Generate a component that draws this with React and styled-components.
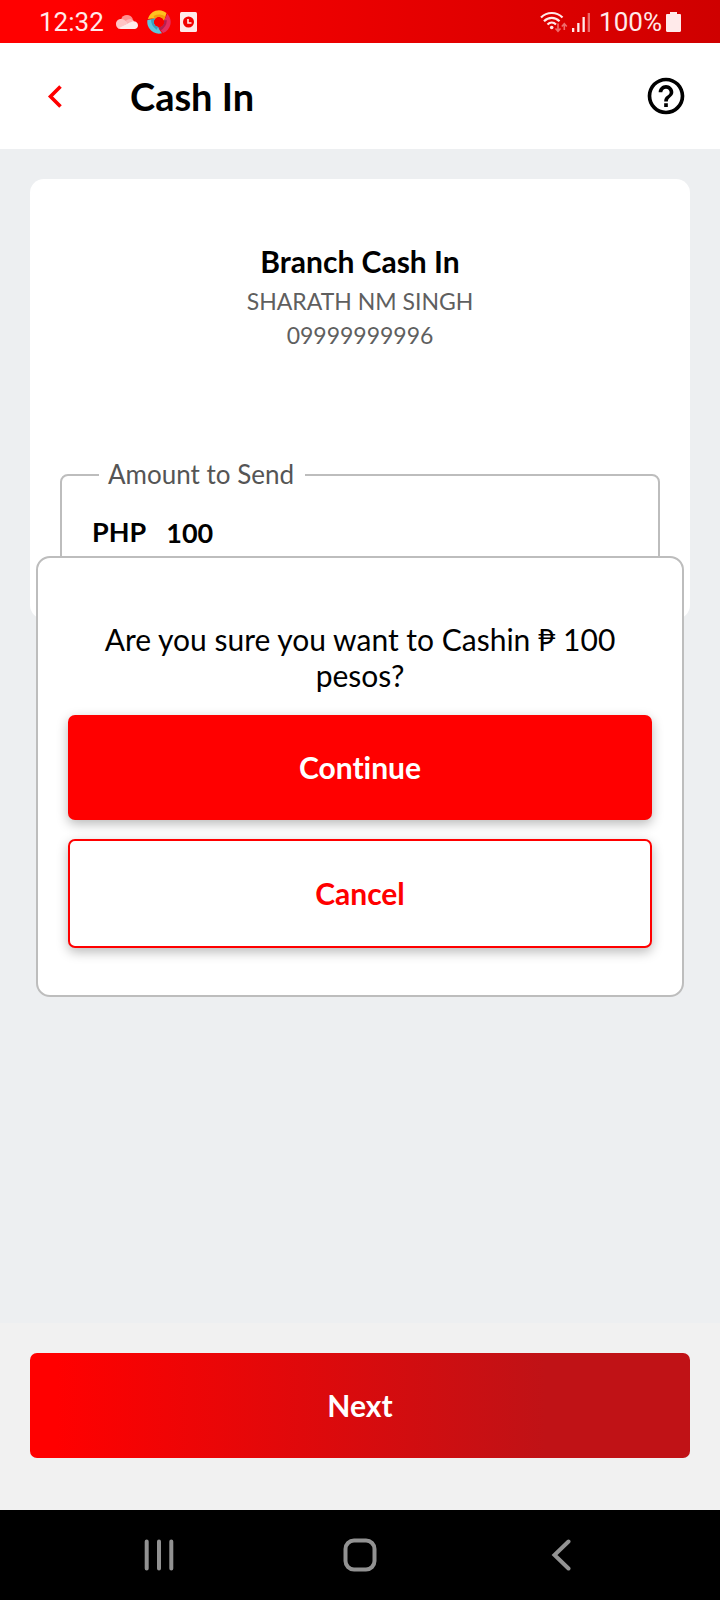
import React, { useState } from "react";
import styled, { createGlobalStyle, css } from "styled-components";
import { MdHelpOutline } from "react-icons/md";

const GlobalStyle = createGlobalStyle`
  *, *::before, *::after { box-sizing: border-box; }
  body {
    margin: 0;
    background: #edeff1;
    color: #000;
    font-family: Lato, "Liberation Sans", sans-serif;
    font-variant-ligatures: none;
  }
  button, input { font-family: inherit; font-variant-ligatures: none; }
`;

const Page = styled.div`
  min-height: 100vh;
  display: flex;
  flex-direction: column;
`;

const StatusBar = styled.div`
  height: 43px;
  padding: 0 39px;
  display: flex;
  align-items: center;
  justify-content: space-between;
  background: linear-gradient(90deg, #ff0000 10%, #cf0000 100%);
  color: #ffeaea;
  font-family: Roboto, "Liberation Sans", sans-serif;
  font-size: 26px;
  line-height: 30px;
`;

const StatusGroup = styled.div`
  display: flex;
  align-items: center;
  gap: ${(p) => p.$gap}px;

  svg { display: block; }
`;

const Screen = styled.div`
  position: relative;
  flex: 1;
  display: flex;
  flex-direction: column;
`;

const Header = styled.header`
  height: 106px;
  padding: 0 32px 0 33px;
  display: flex;
  align-items: center;
  background: #fff;
`;

const IconButton = styled.button`
  width: 44px;
  height: 44px;
  padding: 0;
  border: 0;
  display: grid;
  place-items: center;
  background: none;
  color: ${(p) => p.$color};
  cursor: pointer;

  svg { display: block; }
`;

const Title = styled.h1`
  flex: 1;
  margin: 0 0 0 53px;
  font-size: 38px;
  font-weight: 700;
  line-height: 46px;
`;

const Content = styled.main`
  flex: 1;
  padding: 30px;
`;

const Card = styled.section`
  padding: 62px 30px 30px;
  border-radius: 14px;
  background: #fff;
`;

const Recipient = styled.div`
  text-align: center;
`;

const RecipientTitle = styled.h2`
  margin: 0 0 3px;
  font-size: 30px;
  font-weight: 700;
  line-height: 40px;
`;

const RecipientLine = styled.p`
  margin: 0;
  color: #5f5f5f;
  font-size: 23px;
  line-height: 34px;
`;

const AmountField = styled.fieldset`
  margin: 107px 0 0;
  padding: 23px 30px 37px;
  min-width: 0;
  border: 2px solid #bdbdbd;
  border-radius: 8px;
`;

const Legend = styled.legend`
  margin-left: 7px;
  padding: 0 11px 2px 9px;
  color: #555;
  font-size: 26px;
  line-height: 30px;
`;

const AmountRow = styled.div`
  display: flex;
  align-items: center;
  gap: 20px;
  font-size: 27px;
  font-weight: 700;
  line-height: 36px;
`;

const AmountInput = styled.input`
  flex: 1;
  min-width: 0;
  height: 36px;
  padding: 0;
  border: 0;
  outline: 0;
  background: none;
  color: inherit;
  font-size: inherit;
  font-weight: inherit;
`;

const Footer = styled.footer`
  padding: 30px 30px 52px;
  background: #f1f1f1;
`;

const variants = {
  solid: css`
    height: 105px;
    background: #ff0000;
    color: #fff;
    box-shadow: 0 4px 12px rgba(0, 0, 0, 0.28);
  `,
  outline: css`
    height: 109px;
    border: 2px solid #ff0000;
    background: #fff;
    color: #ff0000;
    box-shadow: 0 4px 12px rgba(0, 0, 0, 0.28);
  `,
  gradient: css`
    height: 105px;
    background: linear-gradient(90deg, #ff0000 4%, #c01216 78%);
    color: #fff;
  `,
};

const Button = styled.button`
  display: block;
  width: 100%;
  padding: 0 0 2px;
  border: 0;
  border-radius: 7px;
  font-size: 30px;
  font-weight: 700;
  line-height: 36px;
  cursor: pointer;
  ${(p) => variants[p.$variant]}
`;

const Overlay = styled.div`
  position: absolute;
  inset: 0;
  padding: 0 36px;
  display: flex;
  align-items: center;
`;

const Dialog = styled.div`
  width: 100%;
  padding: 63px 30px 47px;
  border: 2px solid #bdbdbd;
  border-radius: 14px;
  background: #fff;
`;

const Question = styled.p`
  margin: 0 0 22px;
  padding: 0 24px;
  text-align: center;
  font-size: 30px;
  line-height: 36px;
`;

const Actions = styled.div`
  display: grid;
  gap: 19px;
`;

const NavBar = styled.nav`
  height: 90px;
  padding: 0 58px;
  display: grid;
  grid-template-columns: repeat(3, 1fr);
  place-items: center;
  background: #000;
`;

function CloudIcon() {
  return (
    <svg width="22" height="16" viewBox="0 0 22 16" aria-hidden="true">
      <path d="M5 6C5.5 2.800 8 1 11 1c2.600 0 4.800 1.400 5.800 4L9 9z" fill="#ff8f8f" />
      <path d="M5 5c-3 0-5 2.300-5 5 0 2 1 3.600 2.500 4.500L13 9 9 6.500C8 5.500 6.600 5 5 5z" fill="#ffc4c4" />
      <path d="M9.500 7c2-2 5-2.800 7.500-1.400L18 8l-5 1.500z" fill="#ffb3b3" />
      <path d="M2 14.300 12.500 9l4-1.600C20 7 22 9 22 11.500c0 2-1.600 3.500-3.600 3.500H5c-1.200 0-2.200-.2-3-.7z" fill="#ffecec" />
    </svg>
  );
}

const vanes = [
  { angle: 0, light: "#ffc01f", dark: "#f59a0c" },
  { angle: 120, light: "#e62e60", dark: "#b3204f" },
  { angle: 240, light: "#5cc6dc", dark: "#3a9fc0" },
];

function PinwheelIcon() {
  return (
    <svg width="24" height="24" viewBox="0 0 24 24" aria-hidden="true">
      {vanes.map(({ angle, light, dark }) => (
        <g key={angle} transform={`rotate(${angle} 12 12)`}>
          <path d="M.8 9A11.600 11.600 0 0 1 19.500 3l-2.500 7.500A5.200 5.200 0 0 0 8 8.700Q4 8 .8 9z" fill={light} />
          <path d="M6.500 6Q13 3 18.500 6.500l-1.500 4A5.200 5.200 0 0 0 8 8.700z" fill={dark} />
        </g>
      ))}
    </svg>
  );
}

function DocClockIcon() {
  return (
    <svg width="17" height="20" viewBox="0 0 17 20" aria-hidden="true">
      <rect width="17" height="20" rx="1.500" fill="#ffeaea" />
      <circle cx="8.500" cy="10" r="5.500" fill="#f20000" />
      <path d="M8 7v4h3.500" fill="none" stroke="#ffeaea" strokeWidth="1.600" />
    </svg>
  );
}

function WifiIcon() {
  return (
    <svg width="28" height="22" viewBox="0 0 28 22" aria-hidden="true">
      <g fill="none" stroke="#ffeaea" strokeWidth="2.200">
        <path d="M1 6.500c6-6 15.500-6 21.500 0" />
        <path d="M4 10.300c4.500-4.500 11-4.500 15.500 0" />
        <path d="M7.500 13.500c2.500-2.400 6-2.400 8.500 0" />
      </g>
      <circle cx="11.700" cy="16.500" r="1.800" fill="#ffeaea" />
      <g fill="none" stroke="#ee6b6b" strokeWidth="1.600">
        <path d="M18 12.500v7.500M15.500 17.500 18 20.200l2.500-2.700" />
        <path d="M24.300 19v-6M21.800 15.500l2.500-2.700 2.500 2.700" />
      </g>
    </svg>
  );
}

function SignalIcon() {
  return (
    <svg width="18" height="20" viewBox="0 0 18 20" aria-hidden="true">
      <path d="M0 16h2.300v4H0zM5.200 11h2.300v9H5.200zM10.500 5h2.300v15h-2.300z" fill="#ffeaea" />
      <path d="M15.700 1H18v19h-2.300z" fill="#ee6b6b" />
    </svg>
  );
}

function BatteryIcon() {
  return (
    <svg width="15" height="20" viewBox="0 0 15 20" aria-hidden="true">
      <path d="M4 0h7v2h2.800c.7 0 1.200.5 1.200 1.200v15.600c0 .7-.5 1.200-1.200 1.200H1.200C.5 20 0 19.500 0 18.800V3.200C0 2.500.5 2 1.200 2H4z" fill="#ffeaea" />
    </svg>
  );
}

function BackIcon() {
  return (
    <svg width="16" height="24" viewBox="0 0 16 24" aria-hidden="true">
      <path d="M13.500 2.500 3.500 12.500l10 10" fill="none" stroke="#ff0000" strokeWidth="3.600" />
    </svg>
  );
}

function RecentsIcon() {
  return (
    <svg width="30" height="32" viewBox="0 0 30 32" aria-hidden="true">
      <path d="M2.700 2.500v27M15 2.500v27M27.300 2.500v27" stroke="#929292" strokeWidth="4" strokeLinecap="round" />
    </svg>
  );
}

function HomeIcon() {
  return (
    <svg width="34" height="34" viewBox="0 0 34 34" aria-hidden="true">
      <rect x="2.500" y="2.500" width="29" height="29" rx="8.500" fill="none" stroke="#929292" strokeWidth="4" />
    </svg>
  );
}

function NavBackIcon() {
  return (
    <svg width="20" height="32" viewBox="0 0 20 32" aria-hidden="true">
      <path d="M17.500 2.500 3.500 16l14 13.500" fill="none" stroke="#929292" strokeWidth="4" strokeLinecap="round" />
    </svg>
  );
}

export default function App() {
  const [amount, setAmount] = useState("100");

  return (
    <Page>
      <GlobalStyle />
      <StatusBar>
        <StatusGroup $gap={12}>
          <span>12:32</span>
          <StatusGroup $gap={9}>
            <CloudIcon />
            <PinwheelIcon />
            <DocClockIcon />
          </StatusGroup>
        </StatusGroup>
        <StatusGroup $gap={9}>
          <StatusGroup $gap={4}>
            <WifiIcon />
            <SignalIcon />
          </StatusGroup>
          <StatusGroup $gap={4}>
            <span>100%</span>
            <BatteryIcon />
          </StatusGroup>
        </StatusGroup>
      </StatusBar>

      <Screen>
        <Header>
          <IconButton $color="#ff0000" aria-label="Back">
            <BackIcon />
          </IconButton>
          <Title>Cash In</Title>
          <IconButton $color="#000" aria-label="Help">
            <MdHelpOutline size={44} />
          </IconButton>
        </Header>

        <Content>
          <Card>
            <Recipient>
              <RecipientTitle>Branch Cash In</RecipientTitle>
              <RecipientLine>SHARATH NM SINGH</RecipientLine>
              <RecipientLine>09999999996</RecipientLine>
            </Recipient>
            <AmountField>
              <Legend>
                <label htmlFor="amount">Amount to Send</label>
              </Legend>
              <AmountRow>
                <span>PHP</span>
                <AmountInput
                  id="amount"
                  inputMode="decimal"
                  value={amount}
                  onChange={(e) => setAmount(e.target.value)}
                />
              </AmountRow>
            </AmountField>
          </Card>
        </Content>

        <Footer>
          <Button $variant="gradient">Next</Button>
        </Footer>

        <Overlay>
          <Dialog role="dialog" aria-modal="true" aria-labelledby="confirm-text">
            <Question id="confirm-text">
              Are you sure you want to Cashin ₱ {amount} pesos?
            </Question>
            <Actions>
              <Button $variant="solid">Continue</Button>
              <Button $variant="outline">Cancel</Button>
            </Actions>
          </Dialog>
        </Overlay>
      </Screen>

      <NavBar aria-label="System navigation">
        <IconButton $color="#929292" aria-label="Recent apps">
          <RecentsIcon />
        </IconButton>
        <IconButton $color="#929292" aria-label="Home">
          <HomeIcon />
        </IconButton>
        <IconButton $color="#929292" aria-label="Back">
          <NavBackIcon />
        </IconButton>
      </NavBar>
    </Page>
  );
}
